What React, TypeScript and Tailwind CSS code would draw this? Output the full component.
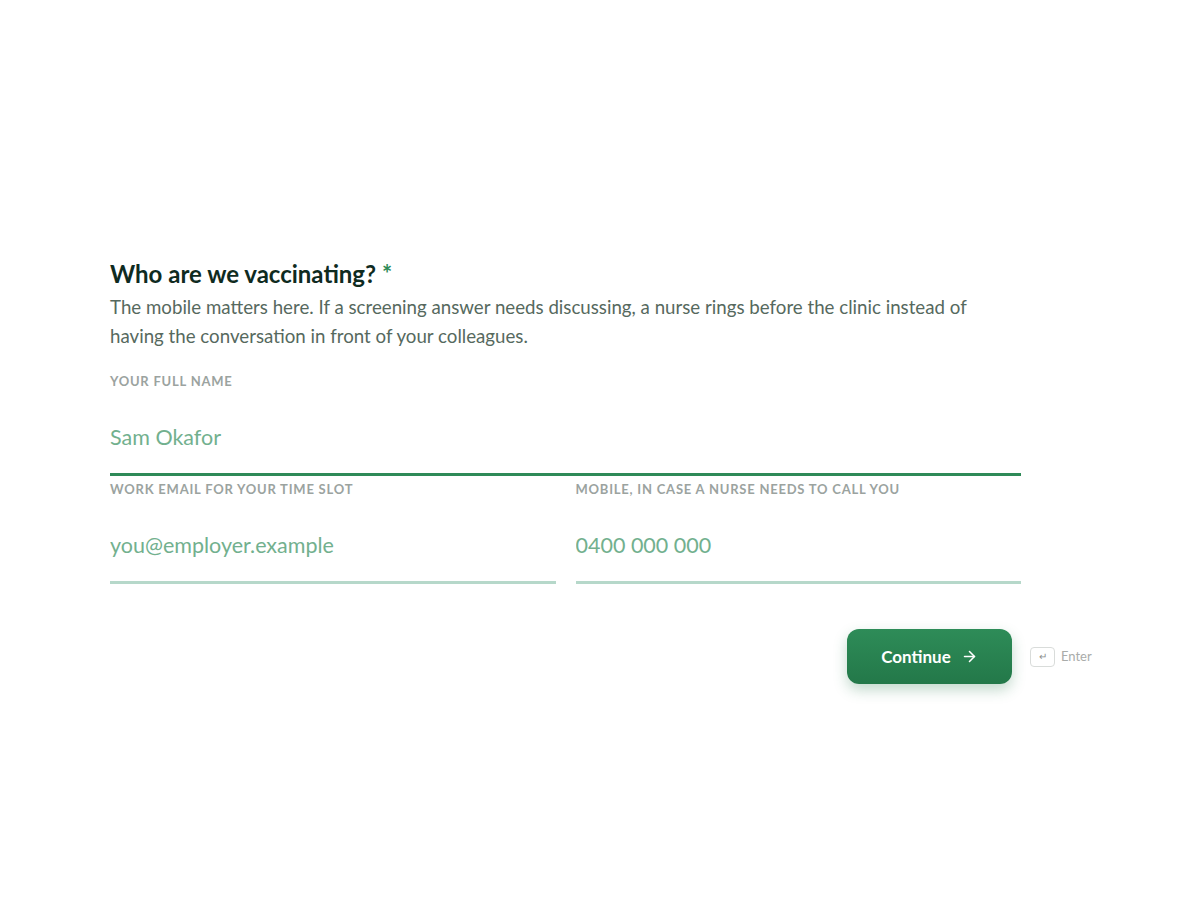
import React from 'react'
import { ArrowRight } from 'lucide-react'

const font = { fontFamily: 'Lato, "Noto Sans", sans-serif' }

interface FieldProps {
  label: string
  placeholder: string
  focused?: boolean
  type?: string
}

function Field({ label, placeholder, focused, type = 'text' }: FieldProps) {
  return (
    <label className="flex flex-col">
      <span className="text-[13px] leading-[18px] font-bold tracking-[0.06em] uppercase text-[#9ba39f]">
        {label}
      </span>
      <input
        type={type}
        placeholder={placeholder}
        className={
          'h-[86px] box-border pt-[10px] bg-transparent outline-none text-[21.5px] text-[#1c3a2c] placeholder:text-[#72b08e] ' +
          (focused ? 'border-b-[3px] border-[#2f8a58]' : 'border-b-[3px] border-[#b6d8ca]')
        }
        style={font}
      />
    </label>
  )
}

export default function App() {
  return (
    <div className="min-h-screen bg-white" style={font}>
      <div className="mx-auto w-[980px] pt-[258px]">
        <div className="w-[911px]">
          <h1 className="text-[24px] leading-[32px] font-bold text-[#0f2b1f]">
            Who are we vaccinating? <span className="text-[#2e8b57]">*</span>
          </h1>
          <p className="mt-[3px] text-[18.7px] leading-[29px] text-[#56695e] pr-[40px]">
            The mobile matters here. If a screening answer needs discussing, a nurse rings before the clinic instead of
            having the conversation in front of your colleagues.
          </p>

          <div className="mt-[21px]">
            <Field label="Your full name" placeholder="Sam Okafor" focused />
          </div>
          <div className="mt-1 grid grid-cols-2 gap-5">
            <Field label="Work email for your time slot" placeholder="you@employer.example" type="email" />
            <Field label="Mobile, in case a nurse needs to call you" placeholder="0400 000 000" type="tel" />
          </div>
        </div>

        <div className="mt-[45px] flex items-center justify-end gap-[18px]">
          <button className="h-[55px] w-[165px] rounded-[12px] bg-gradient-to-b from-[#2e8c58] to-[#237849] text-white text-[17px] font-bold flex items-center justify-center gap-[10px] shadow-[0_6px_14px_rgba(35,120,73,0.28)]">
            Continue
            <ArrowRight className="w-[17px] h-[17px]" strokeWidth={2.2} />
          </button>
          <div className="w-[60px] flex items-center gap-[6px] text-[13px] text-[#a9acaa]">
            <span className="w-[25px] h-[20px] shrink-0 rounded-[4px] border border-[#d9dcda] flex items-center justify-center text-[10px] text-[#8b8f8d]">
              ↵
            </span>
            Enter
          </div>
        </div>
      </div>
    </div>
  )
}
